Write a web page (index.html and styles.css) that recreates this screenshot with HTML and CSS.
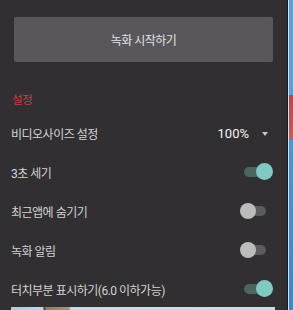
FILE: index.html
```html
<!DOCTYPE html>
<html lang="ko">
<head>
  <meta charset="UTF-8">
  <meta name="viewport" content="width=device-width, initial-scale=1.0">
  <title>녹화 설정</title>
  <link rel="stylesheet" href="styles.css">
</head>
<body>
  <div class="app">
    <div class="panel">
      <button class="record-button">녹화 시작하기</button>

      <div class="section-title">설정</div>

      <div class="row">
        <span class="label">비디오사이즈 설정</span>
        <div class="spinner">
          <span class="value">100%</span>
          <span class="arrow"></span>
        </div>
      </div>
      <div class="row">
        <span class="label">3초 세기</span>
        <span class="switch on"><span class="track"></span><span class="thumb"></span></span>
      </div>
      <div class="row">
        <span class="label">최근앱에 숨기기</span>
        <span class="switch"><span class="track"></span><span class="thumb"></span></span>
      </div>
      <div class="row">
        <span class="label">녹화 알림</span>
        <span class="switch"><span class="track"></span><span class="thumb"></span></span>
      </div>
      <div class="row">
        <span class="label">터치부분 표시하기(6.0 이하가능)</span>
        <span class="switch on"><span class="track"></span><span class="thumb"></span></span>
      </div>

      <!-- preview image peeking at the bottom -->
      <div class="preview"></div>
    </div>
    <div class="edge"></div>
  </div>
</body>
</html>
```

FILE: styles.css
```css
body {
  margin: 0;
  background-color: #312f31;
  font-family: Roboto, "Noto Sans CJK KR", sans-serif;
}
.app {
  display: flex;
  height: 310px;
  overflow: hidden;
}
.panel {
  width: 288px;
  flex-shrink: 0;
  background-color: #312f31;
  border-right: 1px solid #1c1b1d;
  box-sizing: border-box;
  padding-top: 17px;
  overflow: hidden;
}
.edge {
  flex: 1;
  border-left: 1px solid #cfe3f3;
  background: linear-gradient(#5b9fd6 0, #5b9fd6 95px, #b4484d 95px, #c0605c 140px, #4d93cf 140px, #3f86c6 310px);
}
.record-button {
  display: block;
  width: 259px;
  height: 45px;
  margin: 0 0 0 14px;
  border: none;
  border-radius: 2px;
  background-color: #59575b;
  color: #e4e4e4;
  font-family: Roboto, "Noto Sans CJK KR", sans-serif;
  font-size: 12px;
  letter-spacing: -0.5px;
  padding: 0;
}
.section-title {
  height: 20px;
  line-height: 20px;
  margin: 28px 0 4px 12px;
  color: #c9403f;
  font-size: 11.5px;
  letter-spacing: -0.5px;
}
.row {
  display: flex;
  align-items: center;
  justify-content: space-between;
  height: 39px;
  padding: 0 15px 0 11px;
}
.label {
  color: #d4d4d4;
  font-size: 12px;
  letter-spacing: -0.5px;
}
.spinner {
  display: flex;
  align-items: center;
  gap: 13px;
  margin-right: 4px;
}
.value {
  color: #f4f4f4;
  font-size: 13px;
}
.arrow {
  width: 0;
  height: 0;
  border-left: 3.5px solid transparent;
  border-right: 3.5px solid transparent;
  border-top: 4px solid #c8c8c8;
}
.switch {
  position: relative;
  width: 32px;
  height: 17px;
}
.switch .track {
  position: absolute;
  left: 4px;
  top: 3px;
  width: 22px;
  height: 10px;
  border-radius: 5px;
  background-color: #5c5b5e;
}
.switch .thumb {
  position: absolute;
  left: 0;
  top: 0;
  width: 16px;
  height: 16px;
  border-radius: 50%;
  background-color: #bdbcbd;
}
.switch.on .track {
  background-color: #4c6462;
}
.switch.on .thumb {
  left: 16px;
  top: -1px;
  width: 17px;
  height: 17px;
  background-color: #7fcbc3;
}
.preview {
  height: 6px;
  margin: -2px 12px 0 11px;
  background: linear-gradient(90deg, #a9cde3 0, #b9d8ea 32px, #3a3434 33px, #8a7a68 35px, #a8957d 58px, #c6dbe8 60px, #c8dde9 100%);
}
```
